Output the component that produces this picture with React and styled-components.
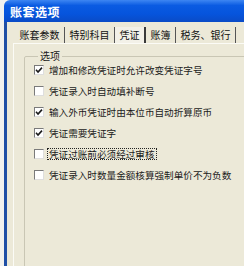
import React from 'react';
import styled, { createGlobalStyle } from 'styled-components';

const Global = createGlobalStyle`
  html, body {
    margin: 0;
    padding: 0;
    background: #f2f2ef;
  }
  body {
    font-family: "Noto Sans CJK SC", "Noto Sans", sans-serif;
    color: #1a1a1a;
  }
`;

const Window = styled.div`
  margin-left: 4px;
  width: 240px;
  height: 266px;
  display: flex;
  flex-direction: column;
  overflow: hidden;
`;

const TitleBar = styled.div`
  flex: none;
  height: 22px;
  display: flex;
  align-items: center;
  padding-left: 6px;
  border-top-left-radius: 6px;
  background: linear-gradient(#3d86f2 0%, #0a5be2 25%, #0654dc 65%, #0a4bc6 100%);
  color: #fff;
  font-size: 12px;
  font-weight: bold;
  letter-spacing: 0.5px;
`;

const Body = styled.div`
  flex: 1;
  display: flex;
  flex-direction: column;
  padding: 5px 0 0 6px;
  background: #ece9d8;
  border-left: 3px solid #1f4fa6;
`;

const TabStrip = styled.div`
  display: flex;
  height: 16px;
  padding-left: 2px;
`;

const Tab = styled.div`
  padding: 0 4.5px;
  font-size: 10px;
  line-height: 16px;
  white-space: nowrap;
  background: ${p => (p.$active ? '#f3f1e8' : 'transparent')};
  border-right: ${p => (p.$active ? '2px solid #3a3a3a' : '1px solid #555')};
  color: #111;
`;

const Panel = styled.div`
  flex: 1;
  padding: 7px 0 0 10px;
  border-top: 1px solid #fbfbf6;
  border-left: 1px solid #fbfbf6;
`;

const Group = styled.fieldset`
  margin: 0;
  padding: 0 0 0 9px;
  height: 240px;
  width: 240px;
  border: 1px solid #c9c6b4;
  border-radius: 2px;
`;

const Legend = styled.legend`
  margin-left: 4px;
  padding: 0 2px;
  font-size: 10px;
  line-height: 10px;
`;

const Options = styled.div`
  display: flex;
  flex-direction: column;
  margin-top: -2px;
`;

const Row = styled.label`
  display: flex;
  align-items: center;
  gap: 4px;
  height: 21px;
  font-size: 9.6px;
  white-space: nowrap;
`;

const Box = styled.span`
  flex: none;
  width: 8px;
  height: 8px;
  display: flex;
  align-items: center;
  justify-content: center;
  background: #fff;
  border: 1px solid;
  border-color: #7a7a7a #dedede #dedede #7a7a7a;
`;

const Text = styled.span`
  padding: 0 1px;
  line-height: 10px;
  outline: ${p => (p.$focused ? '1px dotted #222' : 'none')};
`;

const tabs = ['账套参数', '特别科目', '凭证', '账簿', '税务、银行'];

const options = [
  { text: '增加和修改凭证时允许改变凭证字号', checked: true },
  { text: '凭证录入时自动填补断号', checked: false },
  { text: '输入外币凭证时由本位币自动折算原币', checked: true },
  { text: '凭证需要凭证字', checked: true },
  { text: '凭证过账前必须经过审核', checked: false, focused: true },
  { text: '凭证录入时数量金额核算强制单价不为负数', checked: false },
];

function Check({ checked }) {
  return (
    <Box>
      {checked && (
        <svg width="8" height="8" viewBox="0 0 8 8">
          <path d="M1 3.8 L3 6 L7 1.6" fill="none" stroke="#1a1a1a" strokeWidth="1.6" />
        </svg>
      )}
    </Box>
  );
}

export default function App() {
  return (
    <Window>
      <Global />
      <TitleBar>账套选项</TitleBar>
      <Body>
        <TabStrip>
          {tabs.map((t, i) => (
            <Tab key={t} $active={i === 2}>{t}</Tab>
          ))}
        </TabStrip>
        <Panel>
          <Group>
            <Legend>选项</Legend>
            <Options>
              {options.map(o => (
                <Row key={o.text}>
                  <Check checked={o.checked} />
                  <Text $focused={o.focused}>{o.text}</Text>
                </Row>
              ))}
            </Options>
          </Group>
        </Panel>
      </Body>
    </Window>
  );
}
